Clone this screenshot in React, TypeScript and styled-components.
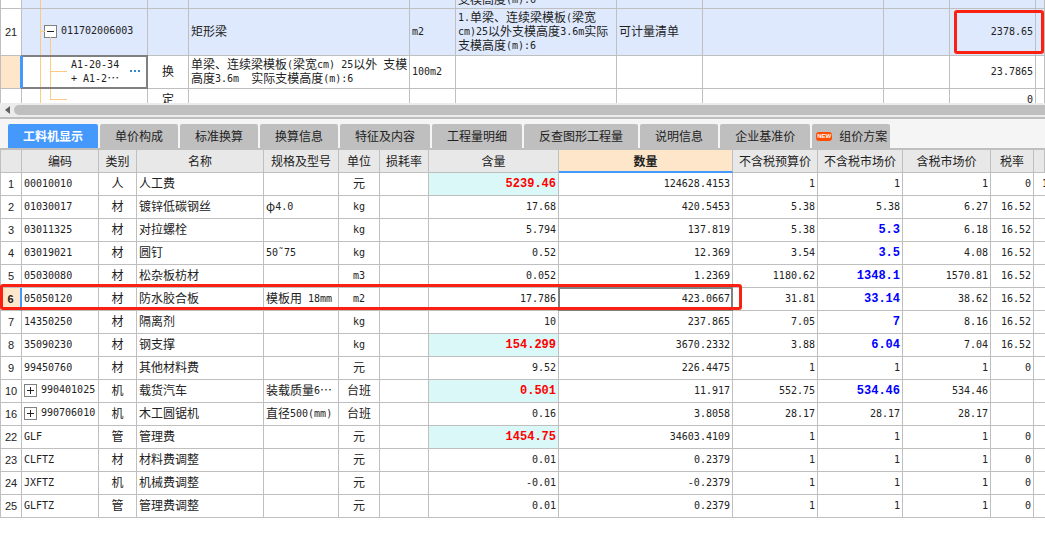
import React from "react";
import styled, { createGlobalStyle, css } from "styled-components";

const LINE = "#bfbfbf";
const ACCENT = "#4599fc";
const CREAM = "#fee6cb";
const TREE = "#fcca80";
const ALERT = "#fb2112";
const DOTS = "\u22EF";

const GlobalStyle = createGlobalStyle`
  * { box-sizing: border-box; }
  body {
    margin: 0;
    background: #fff;
    color: #222;
    font: 12px/14px "Noto Sans CJK SC", sans-serif;
  }
  button { font: inherit; color: inherit; padding: 0; border: 0; background: none; }
`;

const Page = styled.main`
  width: 100%;
  overflow: hidden;
`;

/* ---------- text ---------- */

const Latin = styled.span`
  font-family: "DejaVu Sans Mono", monospace;
  font-size: 10px;
  line-height: 0;
  vertical-align: 1px;
`;

const StrongLatin = styled.span`
  font-family: "Liberation Mono", monospace;
  font-size: 12px;
  font-weight: 700;
  line-height: 0;
  vertical-align: 1px;
`;

const Han = styled.span`
  font-family: "Noto Sans CJK SC", sans-serif;
`;

function Mixed({ text }: { text: string }) {
  const runs = text.match(/[\x20-\x7e˜]+|[^\x20-\x7e˜]+/g) ?? [];
  return (
    <>
      {runs.map((run, i) =>
        /^[\x20-\x7e˜]/.test(run) ? (
          <Latin key={i}>{run}</Latin>
        ) : (
          <Han key={i}>{run}</Han>
        )
      )}
    </>
  );
}

/* ---------- grids ---------- */

const Grid = styled.table`
  width: 100%;
  table-layout: fixed;
  border-collapse: separate;
  border-spacing: 0;
  border-left: 1px solid ${LINE};
`;

type CellProps = {
  $align?: "left" | "center" | "right";
  $tint?: string;
};

const Cell = styled.td<CellProps>`
  position: relative;
  padding: 0 2px 2px;
  border-right: 1px solid ${LINE};
  border-bottom: 1px solid ${LINE};
  background: ${(p) => p.$tint ?? "transparent"};
  text-align: ${(p) => p.$align ?? "left"};
  vertical-align: middle;
  white-space: pre;
  overflow: hidden;
`;

const NumberCell = styled.th<{ $current?: boolean }>`
  position: relative;
  padding: 0;
  border-right: 1px solid ${LINE};
  border-bottom: 1px solid ${LINE};
  font-family: "Liberation Sans", sans-serif;
  font-size: 11px;
  font-weight: 400;
  text-align: center;
  ${(p) =>
    p.$current &&
    css`
      background: ${CREAM};
      font-weight: 700;
      border-right: 2px solid ${ACCENT};
    `}
`;

const FocusCell = styled(Cell)<{ $marked?: boolean }>`
  overflow: visible;
  &::after {
    content: "";
    position: absolute;
    inset: -1px;
    border: 2px solid #808080;
    border-left-color: ${(p) => (p.$marked ? ACCENT : "#808080")};
    pointer-events: none;
  }
`;

const HeadCell = styled.th<{ $current?: boolean }>`
  padding: 0;
  height: 23px;
  background: ${(p) => (p.$current ? CREAM : "#e8e8e8")};
  border-right: 1px solid ${LINE};
  border-bottom: ${(p) => (p.$current ? `2px solid ${ACCENT}` : `1px solid ${LINE}`)};
  font-weight: ${(p) => (p.$current ? 700 : 400)};
  white-space: nowrap;
`;

const Toggle = styled.button`
  width: 13px;
  height: 13px;
  border: 1px solid #808080;
  background: #fff;
  display: inline-flex;
  align-items: center;
  justify-content: center;
  flex: none;
`;

function ToggleButton({ open, label }: { open?: boolean; label: string }) {
  return (
    <Toggle type="button" aria-label={label} aria-expanded={!!open}>
      <svg width="7" height="7" shapeRendering="crispEdges">
        <path d={open ? "M0 3h7v1H0z" : "M0 3h7v1H0zM3 0h1v7H3z"} fill="#222" />
      </svg>
    </Toggle>
  );
}

const CodeLine = styled.div<{ $indent?: number }>`
  display: flex;
  align-items: center;
  gap: 4px;
  padding-left: ${(p) => p.$indent ?? 0}px;
`;

/* ---------- bill pane ---------- */

const BillPane = styled.section`
  height: 103px;
  overflow: hidden;
`;

const BillRow = styled.tr<{ $height: number; $list?: boolean }>`
  height: ${(p) => p.$height}px;
  & > td {
    background: ${(p) => (p.$list ? "#dee9fd" : "#fff")};
  }
`;

const ClippedLine = styled.div`
  height: 6px;
  display: flex;
  align-items: flex-end;
`;

const TreeLines = styled.svg`
  position: absolute;
  inset: 0;
  width: 100%;
  height: 100%;
`;

const ChildCode = styled.div`
  position: relative;
  display: flex;
  align-items: center;
  justify-content: space-between;
  padding: 0 5px 0 47px;
  text-align: center;
`;

const MoreButton = styled.button`
  display: flex;
  gap: 2px;
  span {
    width: 2px;
    height: 2px;
    background: #3289cf;
  }
`;

const ValueCell = styled(Cell)`
  overflow: visible;
`;

const ValueMark = styled.span`
  position: absolute;
  inset: 1px -9px 1px 4px;
  border: 3px solid ${ALERT};
  border-radius: 3px;
  z-index: 2;
`;

const RowMark = styled.span`
  position: absolute;
  top: -4px;
  left: -1px;
  width: 742px;
  height: 26px;
  border: 3px solid ${ALERT};
  border-radius: 3px;
  z-index: 2;
`;

const ScrollBar = styled.div`
  display: flex;
  align-items: center;
  height: 14px;
  gap: 4px;
  padding-left: 5px;
  background: #ececec;
  button { display: flex; }
`;

const Thumb = styled.div`
  flex: 1;
  height: 10px;
  background: ${LINE};
  border-radius: 5px 0 0 5px;
`;

/* ---------- tabs ---------- */

const TabBar = styled.nav`
  display: flex;
  gap: 2px;
  padding: 5px 8px 0;
  border-top: 2px solid ${LINE};
  border-bottom: 2px solid ${LINE};
  background: #f5f5f5;
`;

const Tab = styled.button<{ $active?: boolean; $badge?: boolean }>`
  && {
    display: flex;
    align-items: center;
    gap: 7px;
    flex: none;
    height: 24px;
    padding: ${(p) => (p.$badge ? "0 3px 0 4px" : "0 15px")};
    border-radius: 2px 2px 0 0;
    background: ${(p) => (p.$active ? ACCENT : LINE)};
    color: ${(p) => (p.$active ? "#fff" : "#222")};
    font-weight: ${(p) => (p.$active ? 700 : 400)};
    white-space: nowrap;
  }
`;

const NewBadge = styled.span`
  width: 16px;
  height: 9px;
  border-radius: 3px;
  background: #ff4e00;
  color: #fff;
  font: 700 6px/9px "Liberation Sans", sans-serif;
  text-align: center;
`;

/* ---------- data ---------- */

const BILL_COLUMNS = [21, 126, 41, 221, 46, 161, 86, 181, 66, 86];
const RESOURCE_COLUMNS = [21, 77, 38, 127, 75, 41, 49, 130, 174, 85, 85, 88, 43];
const HEADERS = [
  "", "编码", "类别", "名称", "规格及型号", "单位", "损耗率", "含量", "数量",
  "不含税预算价", "不含税市场价", "含税市场价", "税率", "",
];
const TABS = [
  "工料机显示", "单价构成", "标准换算", "换算信息", "特征及内容",
  "工程量明细", "反查图形工程量", "说明信息", "企业基准价", "组价方案",
];

type Resource = {
  no: number;
  code: string;
  kind: string;
  name: string;
  spec?: string;
  unit: string;
  content: string;
  amount: string;
  budget: string;
  market: string;
  taxed: string;
  rate?: string;
  extra?: string;
  group?: boolean;
  hot?: boolean;
  edited?: boolean;
};

const RESOURCES: Resource[] = [
  { no: 1, code: "00010010", kind: "人", name: "人工费", unit: "元", content: "5239.46", amount: "124628.4153", budget: "1", market: "1", taxed: "1", rate: "0", extra: "1", hot: true },
  { no: 2, code: "01030017", kind: "材", name: "镀锌低碳钢丝", spec: "φ4.0", unit: "kg", content: "17.68", amount: "420.5453", budget: "5.38", market: "5.38", taxed: "6.27", rate: "16.52" },
  { no: 3, code: "03011325", kind: "材", name: "对拉螺栓", unit: "kg", content: "5.794", amount: "137.819", budget: "5.38", market: "5.3", taxed: "6.18", rate: "16.52", edited: true },
  { no: 4, code: "03019021", kind: "材", name: "圆钉", spec: "50˜75", unit: "kg", content: "0.52", amount: "12.369", budget: "3.54", market: "3.5", taxed: "4.08", rate: "16.52", edited: true },
  { no: 5, code: "05030080", kind: "材", name: "松杂板枋材", unit: "m3", content: "0.052", amount: "1.2369", budget: "1180.62", market: "1348.1", taxed: "1570.81", rate: "16.52", edited: true },
  { no: 6, code: "05050120", kind: "材", name: "防水胶合板", spec: "模板用 18mm", unit: "m2", content: "17.786", amount: "423.0667", budget: "31.81", market: "33.14", taxed: "38.62", rate: "16.52", edited: true },
  { no: 7, code: "14350250", kind: "材", name: "隔离剂", unit: "kg", content: "10", amount: "237.865", budget: "7.05", market: "7", taxed: "8.16", rate: "16.52", edited: true },
  { no: 8, code: "35090230", kind: "材", name: "钢支撑", unit: "kg", content: "154.299", amount: "3670.2332", budget: "3.88", market: "6.04", taxed: "7.04", rate: "16.52", hot: true, edited: true },
  { no: 9, code: "99450760", kind: "材", name: "其他材料费", unit: "元", content: "9.52", amount: "226.4475", budget: "1", market: "1", taxed: "1", rate: "0" },
  { no: 10, code: "990401025", kind: "机", name: "载货汽车", spec: "装载质量6" + DOTS, unit: "台班", content: "0.501", amount: "11.917", budget: "552.75", market: "534.46", taxed: "534.46", group: true, hot: true, edited: true },
  { no: 16, code: "990706010", kind: "机", name: "木工圆锯机", spec: "直径500(mm)", unit: "台班", content: "0.16", amount: "3.8058", budget: "28.17", market: "28.17", taxed: "28.17", group: true },
  { no: 22, code: "GLF", kind: "管", name: "管理费", unit: "元", content: "1454.75", amount: "34603.4109", budget: "1", market: "1", taxed: "1", rate: "0", hot: true },
  { no: 23, code: "CLFTZ", kind: "材", name: "材料费调整", unit: "元", content: "0.01", amount: "0.2379", budget: "1", market: "1", taxed: "1", rate: "0" },
  { no: 24, code: "JXFTZ", kind: "机", name: "机械费调整", unit: "元", content: "-0.01", amount: "-0.2379", budget: "1", market: "1", taxed: "1", rate: "0" },
  { no: 25, code: "GLFTZ", kind: "管", name: "管理费调整", unit: "元", content: "0.01", amount: "0.2379", budget: "1", market: "1", taxed: "1", rate: "0" },
];

const SELECTED = 6;

const ResourceLine = styled.tr`
  height: 23px;
`;

const Hot = styled(StrongLatin)`
  color: #f00;
`;

const Edited = styled(StrongLatin)`
  color: #00f;
`;

const ExtraCell = styled(Cell)`
  padding-left: 8px;
  border-right: 0;
`;

function Columns({ widths }: { widths: number[] }) {
  return (
    <colgroup>
      {widths.map((w, i) => (
        <col key={i} width={w} />
      ))}
      <col />
    </colgroup>
  );
}

function BillGrid() {
  return (
    <BillPane>
      <Grid>
        <Columns widths={BILL_COLUMNS} />
        <tbody>
          <BillRow $height={9} $list>
            <NumberCell />
            <Cell>
              <TreeLines shapeRendering="crispEdges">
                <path d="M18 0h1v60h-1z" fill={TREE} />
              </TreeLines>
            </Cell>
            <Cell />
            <Cell />
            <Cell />
            <Cell>
              <ClippedLine>
                <span><Mixed text="支模高度(m):6" /></span>
              </ClippedLine>
            </Cell>
            <Cell />
            <Cell />
            <Cell />
            <Cell />
            <Cell />
          </BillRow>
          <BillRow $height={47} $list>
            <NumberCell>21</NumberCell>
            <Cell>
              <TreeLines shapeRendering="crispEdges">
                <path d="M18 0h1v60h-1zM18 22h5v1h-5zM28 28h1v30h-1z" fill={TREE} />
              </TreeLines>
              <CodeLine $indent={20}>
                <ToggleButton open label="收起 011702006003" />
                <Latin>011702006003</Latin>
              </CodeLine>
            </Cell>
            <Cell />
            <Cell>矩形梁</Cell>
            <Cell><Mixed text="m2" /></Cell>
            <Cell>
              <Mixed text={"1.单梁、连续梁模板(梁宽"} /><br />
              <Mixed text={"cm)25以外支模高度3.6m实际"} /><br />
              <Mixed text={"支模高度(m):6"} />
            </Cell>
            <Cell>可计量清单</Cell>
            <Cell />
            <Cell />
            <ValueCell $align="right">
              <Latin>2378.65</Latin>
              <ValueMark />
            </ValueCell>
            <Cell />
          </BillRow>
          <BillRow $height={33}>
            <NumberCell $current />
            <FocusCell $marked>
              <TreeLines shapeRendering="crispEdges">
                <path d="M18 0h1v60h-1zM28 0h1v60h-1zM28 15h17v1h-17z" fill={TREE} />
              </TreeLines>
              <ChildCode>
                <span lang="zh-CN">
                  <Mixed text="A1-20-34" /><br />
                  <Mixed text={"+ A1-2" + DOTS} />
                </span>
                <MoreButton type="button" aria-label="更多">
                  <span /><span /><span />
                </MoreButton>
              </ChildCode>
            </FocusCell>
            <Cell $align="center">换</Cell>
            <Cell>
              <Mixed text="单梁、连续梁模板(梁宽cm) 25以外 支模" /><br />
              <Mixed text="高度3.6m  实际支模高度(m):6" />
            </Cell>
            <Cell><Mixed text="100m2" /></Cell>
            <Cell />
            <Cell />
            <Cell />
            <Cell />
            <Cell $align="right"><Latin>23.7865</Latin></Cell>
            <Cell />
          </BillRow>
          <BillRow $height={22}>
            <NumberCell />
            <Cell>
              <TreeLines shapeRendering="crispEdges">
                <path d="M18 0h1v60h-1zM28 0h1v11h-1zM28 10h17v1h-17z" fill={TREE} />
              </TreeLines>
            </Cell>
            <Cell $align="center">定</Cell>
            <Cell />
            <Cell />
            <Cell />
            <Cell />
            <Cell />
            <Cell />
            <Cell $align="right"><Latin>0</Latin></Cell>
            <Cell />
          </BillRow>
        </tbody>
      </Grid>
    </BillPane>
  );
}

function ResourceRow({ row }: { row: Resource }) {
  const selected = row.no === SELECTED;
  const AmountCell = selected ? FocusCell : Cell;
  return (
    <ResourceLine>
      <NumberCell $current={selected}>
        {row.no}
        {selected && <RowMark />}
      </NumberCell>
      <Cell>
        {row.group ? (
          <CodeLine>
            <ToggleButton label={`展开 ${row.code}`} />
            <Latin>{row.code}</Latin>
          </CodeLine>
        ) : (
          <Latin>{row.code}</Latin>
        )}
      </Cell>
      <Cell $align="center">{row.kind}</Cell>
      <Cell>{row.name}</Cell>
      <Cell>{row.spec && <Mixed text={row.spec} />}</Cell>
      <Cell $align="center"><Mixed text={row.unit} /></Cell>
      <Cell />
      <Cell $align="right" $tint={row.hot ? "#daf8f8" : undefined}>
        {row.hot ? <Hot>{row.content}</Hot> : <Latin>{row.content}</Latin>}
      </Cell>
      <AmountCell $align="right"><Latin>{row.amount}</Latin></AmountCell>
      <Cell $align="right"><Latin>{row.budget}</Latin></Cell>
      <Cell $align="right">
        {row.edited ? <Edited>{row.market}</Edited> : <Latin>{row.market}</Latin>}
      </Cell>
      <Cell $align="right"><Latin>{row.taxed}</Latin></Cell>
      <Cell $align="right"><Latin>{row.rate}</Latin></Cell>
      <ExtraCell><Latin>{row.extra}</Latin></ExtraCell>
    </ResourceLine>
  );
}

export default function App() {
  return (
    <Page lang="zh-CN">
      <GlobalStyle />
      <BillGrid />
      <ScrollBar>
        <button type="button" aria-label="向左滚动">
          <svg width="5" height="8">
            <path d="M5 0v8L0 4z" fill="#606060" />
          </svg>
        </button>
        <Thumb />
      </ScrollBar>
      <TabBar>
        {TABS.map((label, i) => {
          const badge = i === TABS.length - 1;
          return (
            <Tab key={label} type="button" $active={i === 0} $badge={badge}>
              {badge && <NewBadge>NEW</NewBadge>}
              {label}
            </Tab>
          );
        })}
      </TabBar>
      <Grid>
        <Columns widths={RESOURCE_COLUMNS} />
        <thead>
          <tr>
            {HEADERS.map((label, i) => (
              <HeadCell key={i} $current={label === "数量"}>{label}</HeadCell>
            ))}
          </tr>
        </thead>
        <tbody>
          {RESOURCES.map((row) => (
            <ResourceRow key={row.no} row={row} />
          ))}
        </tbody>
      </Grid>
    </Page>
  );
}
